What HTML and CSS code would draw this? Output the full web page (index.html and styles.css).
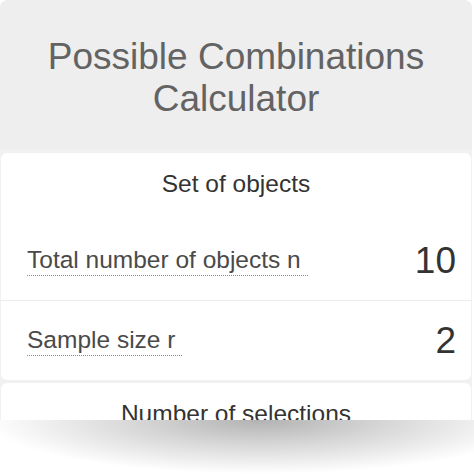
FILE: index.html
```html
<!DOCTYPE html>
<html lang="en">
<head>
  <meta charset="UTF-8" />
  <title>Possible Combinations Calculator</title>
  <link rel="stylesheet" href="styles.css">
</head>
<body>
  <div class="frame">
    <div class="calc">
      <div class="calc-head">
        <h1>Possible Combinations Calculator</h1>
      </div>
      <div class="block">
        <div class="block-title">Set of objects</div>
        <div class="row">
          <span class="label">Total number of objects n</span>
          <span class="value">10</span>
        </div>
        <div class="row">
          <span class="label">Sample size r</span>
          <span class="value">2</span>
        </div>
      </div>
      <div class="block">
        <div class="block-title">Number of selections</div>
      </div>
    </div>
  </div>
  <div class="fade"></div>
</body>
</html>
```

FILE: styles.css
```css
body {
  margin: 0;
  background: #fff;
  font-family: "Liberation Sans", Arial, sans-serif;
}
.frame {
  height: 420px;
  overflow: hidden;
}
.calc {
  margin: 0 2px 0 0;
  background: #f1f1f1;
  border-radius: 8px 8px 0 0;
  padding: 0 1px;
  display: flex;
  flex-direction: column;
  gap: 3px;
}
.calc-head {
  background: #eeeeee;
  border-radius: 8px 8px 0 0;
  margin: 0 -1px;
  padding: 36px 20px 30px;
  height: 84px;
}
.calc-head h1 {
  margin: 0;
  font-size: 37px;
  line-height: 42px;
  font-weight: normal;
  color: #636363;
  text-align: center;
}
.block {
  background: #fff;
  border-radius: 6px;
}
.block-title {
  padding: 16px 0 22px;
  font-size: 24.5px;
  line-height: 30px;
  color: #333;
  text-align: center;
}
.row {
  display: flex;
  justify-content: space-between;
  align-items: center;
  height: 79px;
  padding: 0 15px 0 26px;
}
.row + .row {
  border-top: 1px solid #ececec;
}
.label {
  font-size: 24.5px;
  line-height: 28px;
  color: #4a4a4a;
  padding: 0 7px 1px 0;
  border-bottom: 1px dotted #8a8a8a;
}
.value {
  font-size: 37px;
  line-height: 40px;
  color: #333;
}
.fade {
  height: 54px;
  background: radial-gradient(ellipse 58% 100% at 55% 0, rgba(0, 0, 0, 0.3), rgba(0, 0, 0, 0.16) 45%, rgba(0, 0, 0, 0) 100%);
}
```
